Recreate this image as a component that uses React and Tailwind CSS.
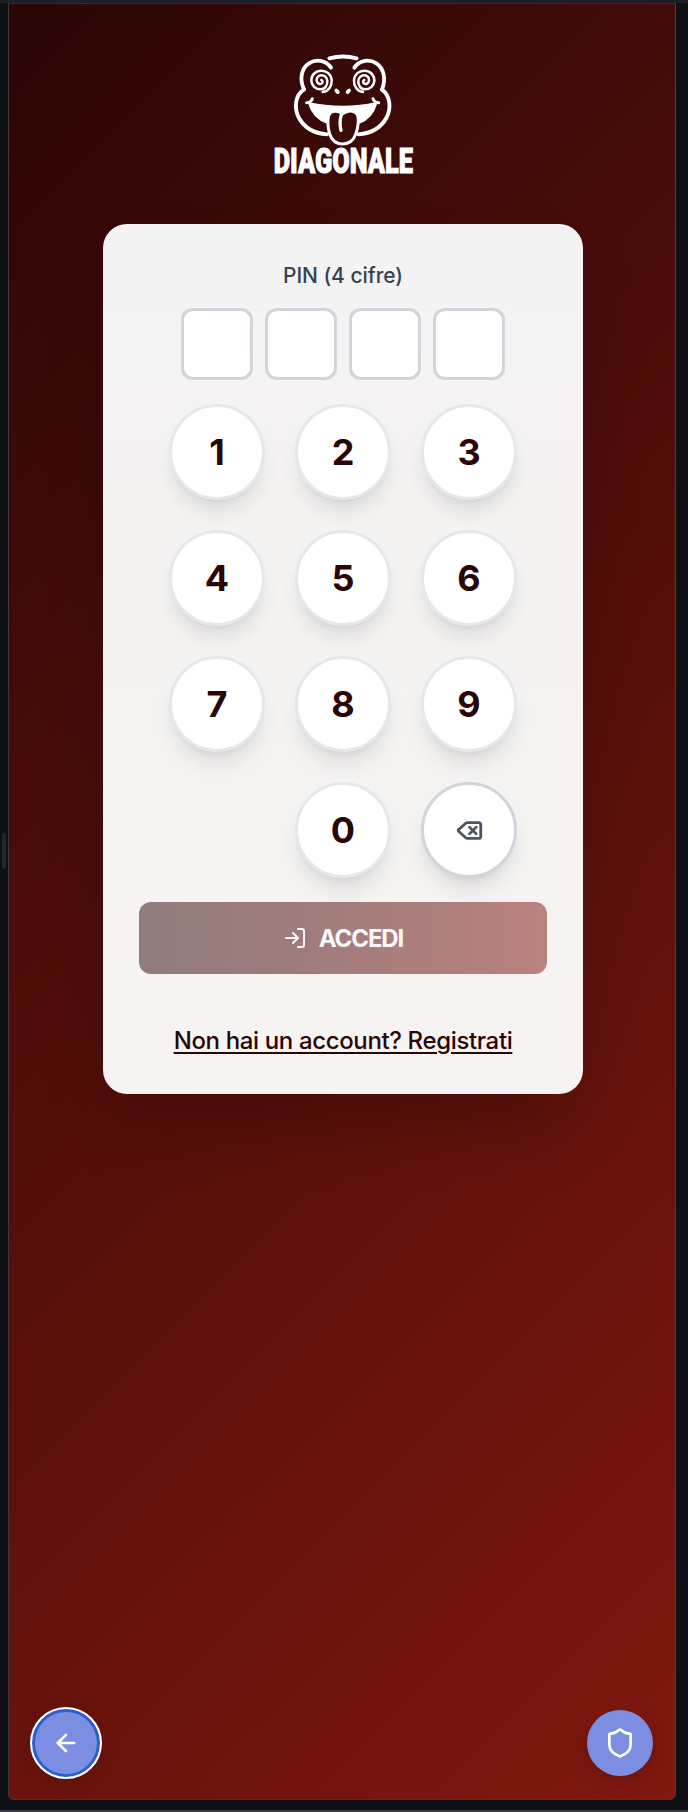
import { ArrowLeft, Delete, LogIn, Shield } from "lucide-react";

const SPIRAL =
  "M188 141 C206 139 216 122 215 106 C214 87 199 77 184 77 C167 77 154 90 154 106 C154 122 167 133 182 133 C195 133 203 120 202 108 C201 97 193 91 184 91 C175 91 169 98 170 106 C171 114 178 119 184 116 C189 113 189 107 184 105";

function Logo() {
  return (
    <svg viewBox="0 0 510 420" className="ml-[3px] h-[140px] w-[170px] overflow-visible" fill="none" stroke="white" strokeWidth="11.5" strokeLinecap="round" strokeLinejoin="round">
      <path d="M208 40 C235 33 264 33 290 40" />
      <path d="M213 68 C197 44 167 42 147 55 C125 69 117 101 132 133" />
      <path d="M283 68 C299 44 329 42 349 55 C371 69 379 101 366 134" />
      <path d="M132 133 C104 151 102 191 117 219 C133 248 163 265 201 268" />
      <path d="M366 134 C392 153 394 191 379 219 C363 248 333 265 295 268" />
      <path strokeWidth="7.5" d={SPIRAL} />
      <path strokeWidth="7.5" d={SPIRAL} transform="translate(497 0) scale(-1 1)" />
      <ellipse cx="231" cy="139" rx="6" ry="9" transform="rotate(-38 231 139)" fill="white" stroke="none" />
      <ellipse cx="265" cy="139" rx="6" ry="9" transform="rotate(38 265 139)" fill="white" stroke="none" />
      <path strokeWidth="9" d="M140 173 C149 173 155 168 157 161" />
      <path strokeWidth="9" d="M356 173 C347 173 341 168 339 161" />
      <path fill="white" strokeWidth="7" d="M148 175 C210 189 286 189 348 175 C339 207 318 225 297 233 C301 204 286 195 269 196 C257 197 248 204 245 208 C237 196 223 193 213 198 C202 204 200 217 202 233 C178 224 157 207 148 175 Z" />
      <path className="fill-[#3a0908]" strokeWidth="9" d="M245 205 C232 195 211 196 206 212 C200 237 205 253 209 267 C216 288 230 297 248 297 C267 297 280 288 287 268 C295 247 298 220 291 208 C282 192 259 197 245 208" />
      <path strokeWidth="10" d="M245 206 C239 223 239 239 243 256" />
      <text x="41" y="384" textLength="418" lengthAdjust="spacingAndGlyphs" fill="white" strokeWidth="3" strokeLinejoin="miter" className="font-['Roboto'] text-[103px] font-black">DIAGONALE</text>
    </svg>
  );
}

function Key({ children }) {
  return (
    <button className="flex size-24 items-center justify-center rounded-full border-[3px] border-[#e5e7eb] bg-white text-[36px] font-bold text-[#2a0606] shadow-[0_15px_22px_-5px_rgba(0,0,0,0.1),0_6px_9px_-6px_rgba(0,0,0,0.1)]">
      {children}
    </button>
  );
}

export default function App() {
  return (
    <div className="flex h-[1812px] w-[688px] flex-col overflow-hidden bg-[#0e1015] font-['Inter',sans-serif]">
      <div className="h-[3px] shrink-0 bg-[#1b1e25]" />
      <div className="flex h-[1797px] shrink-0">
        <div className="flex w-2 items-center justify-center pb-[101px]">
          <div className="h-9 w-1 rounded-full bg-[#23242e]" />
        </div>
        <main className="flex w-[668px] flex-col items-center overflow-hidden rounded-b-[6px] border border-t-[#2c3034] border-r-[#683332] border-b-[#5e2b27] border-l-[#3b3a3c] bg-linear-[135deg] from-[#2a0606] to-[#80180f] pl-[2px]">
          <div className="mt-[41px] h-[140px]">
            <Logo />
          </div>
          <section className="mt-[39px] flex h-[870px] w-[480px] flex-col items-center rounded-[24px] bg-linear-to-b from-[#f4f3f4] via-[#f5f3f2] via-30% to-[#f6f3f2] px-9 pt-[37px] shadow-[0_38px_75px_-18px_rgba(0,0,0,0.25)]">
            <p className="h-[30px] text-[21px] leading-[30px] font-[450] tracking-[-0.05px] text-[#374151]">PIN (4 cifre)</p>
            <div className="mt-[17px] flex gap-3">
              {[0, 1, 2, 3].map((i) => (
                <div key={i} className="size-[72px] rounded-[12px] border-[3px] border-[#d1d5db] bg-white" />
              ))}
            </div>
            <div className="mt-6 grid grid-cols-3 gap-[30px]">
              {[1, 2, 3, 4, 5, 6, 7, 8, 9].map((n) => (
                <Key key={n}>{n}</Key>
              ))}
              <span />
              <Key>0</Key>
              <button className="flex size-24 items-center justify-center rounded-full border-[3px] border-[#d1d5db] bg-white text-[#4b5563] shadow-[0_15px_22px_-5px_rgba(0,0,0,0.1),0_6px_9px_-6px_rgba(0,0,0,0.1)]">
                <Delete size={27} strokeWidth={2.5} />
              </button>
            </div>
            <button className="mt-6 flex h-[72px] w-full shrink-0 items-center justify-center gap-3 rounded-[12px] bg-linear-to-r from-[#2a0404] to-[#80110b] text-[24px] font-bold tracking-[-1.1px] text-white opacity-50">
              <LogIn size={24} strokeWidth={2} />
              <span className="pt-[2px]">ACCEDI</span>
            </button>
            <a className="mt-[49px] text-[24px] leading-9 font-[450] tracking-[-0.36px] text-[#2a0606] underline decoration-2 underline-offset-[3px]">Non hai un account? Registrati</a>
          </section>
          <div className="mt-auto mb-[20px] flex w-full items-center justify-between pr-[21px] pl-[19px]">
            <button className="flex size-[72px] items-center justify-center rounded-full border-[2px] border-white bg-[#7b8ee2] text-white shadow-[0_6px_18px_rgba(0,0,0,0.1),inset_0_0_0_3px_#2b60cc]">
              <ArrowLeft size={28} strokeWidth={2.2} />
            </button>
            <button className="mr-[1px] flex size-[66px] items-center justify-center rounded-full bg-[#7b8ee2] text-white shadow-[0_6px_18px_rgba(0,0,0,0.15)]">
              <Shield size={32} strokeWidth={2} />
            </button>
          </div>
        </main>
      </div>
      <div className="mt-auto h-[2px] bg-[#3a3b40]" />
    </div>
  );
}
